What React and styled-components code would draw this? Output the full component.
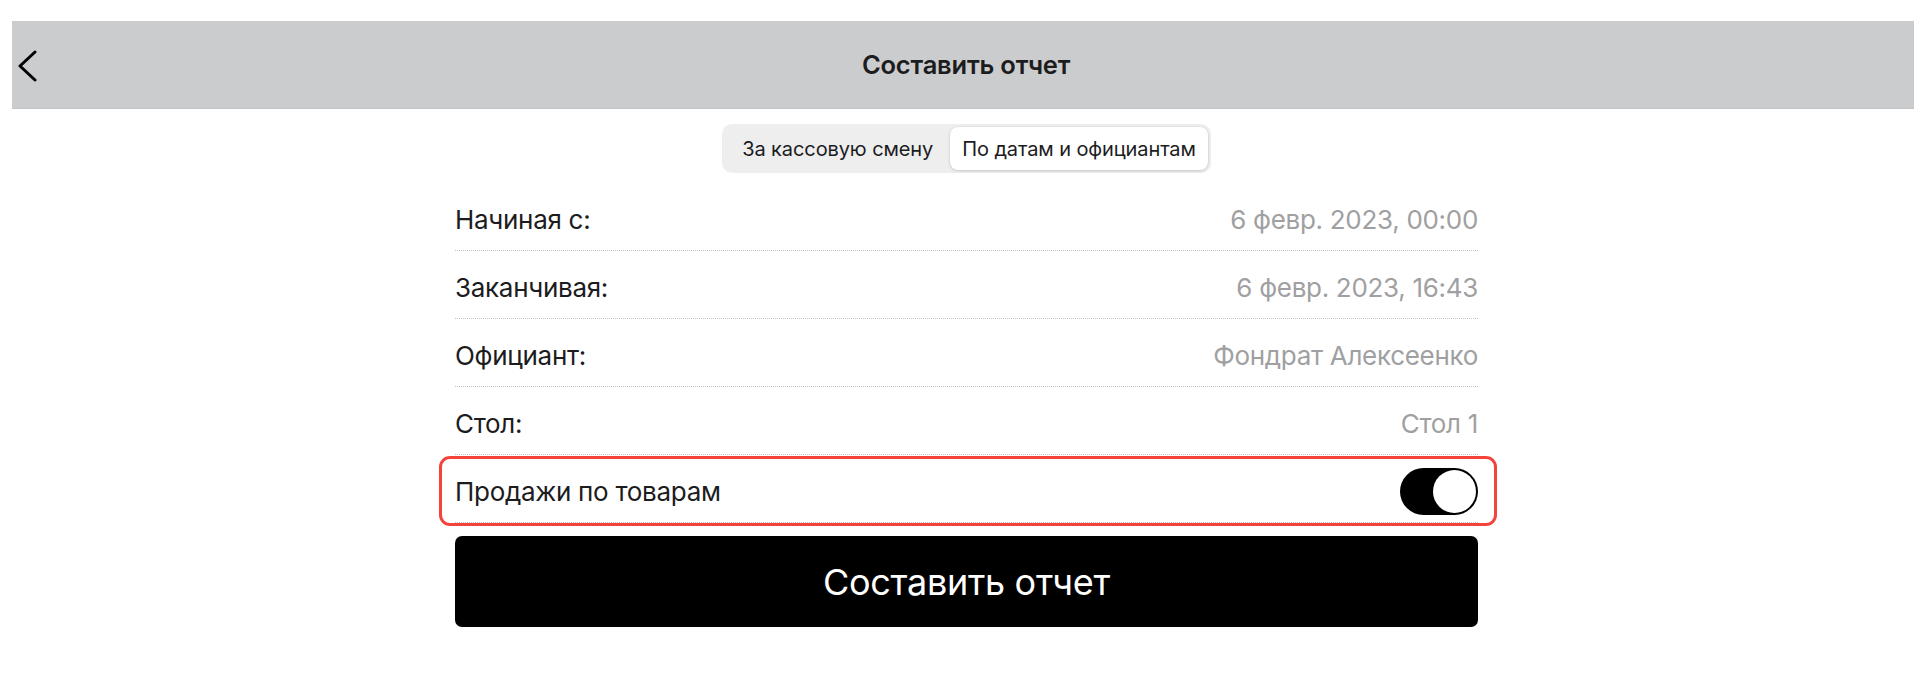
import React, { useState } from 'react'
import styled, { createGlobalStyle } from 'styled-components'

const GlobalStyle = createGlobalStyle`
  html, body {
    margin: 0;
    padding: 0;
    background: #ffffff;
  }
  body {
    font-family: Inter, "Noto Sans", "DejaVu Sans", sans-serif;
    color: #1c1c1e;
    -webkit-font-smoothing: antialiased;
  }
`

const rows = [
  { label: 'Начиная с:', value: '6 февр. 2023, 00:00' },
  { label: 'Заканчивая:', value: '6 февр. 2023, 16:43' },
  { label: 'Официант:', value: 'Фондрат Алексеенко' },
  { label: 'Стол:', value: 'Стол 1' },
]

const tabs = ['За кассовую смену', 'По датам и официантам']

const BackIcon = () => (
  <svg width="20" height="32" viewBox="0 0 20 32" fill="none">
    <polyline
      points="17,2 2,16 17,30"
      stroke="#000"
      strokeWidth="3"
      strokeLinecap="round"
      strokeLinejoin="round"
    />
  </svg>
)

export default function App() {
  const [tab, setTab] = useState(1)
  const [byGoods, setByGoods] = useState(true)

  return (
    <Page>
      <GlobalStyle />
      <TopBar>
        <BackButton aria-label="Назад">
          <BackIcon />
        </BackButton>
        <Title>Составить отчет</Title>
        <span />
      </TopBar>

      <Main>
        <Segmented>
          {tabs.map((t, i) => (
            <Segment key={t} $active={tab === i} onClick={() => setTab(i)}>
              {t}
            </Segment>
          ))}
        </Segmented>

        <Form>
          {rows.map((r) => (
            <Row key={r.label}>
              <Label>{r.label}</Label>
              <Value>{r.value}</Value>
            </Row>
          ))}

          <Highlight>
            <Row $last>
              <Label>Продажи по товарам</Label>
              <Switch $on={byGoods} onClick={() => setByGoods(!byGoods)}>
                <Knob $on={byGoods} />
              </Switch>
            </Row>
          </Highlight>

          <SubmitButton>Составить отчет</SubmitButton>
        </Form>
      </Main>
    </Page>
  )
}

const Page = styled.div`
  padding: 21px 12px 0;
  min-height: 659px;
`

const TopBar = styled.header`
  display: grid;
  grid-template-columns: 1fr auto 1fr;
  align-items: center;
  height: 87px;
  background: #cbcccd;
  border-bottom: 1px solid #c2c3c4;
`

const BackButton = styled.button`
  justify-self: start;
  display: flex;
  align-items: center;
  background: none;
  border: 0;
  padding: 0 0 0 6px;
  margin-top: 2px;
  cursor: pointer;
`

const Title = styled.h1`
  margin: 0;
  padding-left: 6px;
  font-size: 25.5px;
  font-weight: 600;
  color: #1c1c1e;
  letter-spacing: -0.2px;
`

const Main = styled.main`
  display: flex;
  flex-direction: column;
  align-items: center;
  padding: 15px 0 0 7px;
`

const Segmented = styled.div`
  display: inline-flex;
  padding: 3px;
  background: #eeeeef;
  border-radius: 10px;
`

const Segment = styled.button`
  height: 43px;
  padding: 0 ${(p) => (p.$active ? '12px' : '17px')};
  border: 0;
  border-radius: 8px;
  font-family: inherit;
  font-size: 20px;
  font-weight: 400;
  color: #1c1c1e;
  letter-spacing: -0.1px;
  background: ${(p) => (p.$active ? '#ffffff' : 'transparent')};
  box-shadow: ${(p) =>
    p.$active ? '0 1px 3px rgba(0,0,0,0.14), 0 0 0 0.5px rgba(0,0,0,0.06)' : 'none'};
  cursor: pointer;
`

const Form = styled.section`
  width: 1023px;
  margin-top: 10px;
  display: flex;
  flex-direction: column;
`

const Row = styled.div`
  display: flex;
  align-items: center;
  justify-content: space-between;
  height: 62px;
  padding-top: ${(p) => (p.$last ? '1px' : '5px')};
  box-sizing: content-box;
  border-bottom: 1px dotted #c3c3c5;
`

const Label = styled.span`
  font-size: 26px;
  color: #1c1c1e;
  letter-spacing: -0.3px;
`

const Value = styled.span`
  font-size: 26px;
  color: #a0a0a2;
  letter-spacing: -0.3px;
`

const Highlight = styled.div`
  margin: 1px -19px 0 -16px;
  padding: 0 16px 0 13px;
  border: 3px solid #f4433a;
  border-radius: 11px;
`

const Switch = styled.button`
  position: relative;
  width: 78px;
  height: 47px;
  padding: 0;
  border: 0;
  border-radius: 24px;
  background: ${(p) => (p.$on ? '#000000' : '#e5e5ea')};
  cursor: pointer;
`

const Knob = styled.span`
  position: absolute;
  top: 2px;
  left: ${(p) => (p.$on ? '33px' : '2px')};
  width: 43px;
  height: 43px;
  border-radius: 50%;
  background: #ffffff;
  box-shadow: 0 1px 2px rgba(0, 0, 0, 0.2);
`

const SubmitButton = styled.button`
  margin-top: 10px;
  height: 91px;
  border: 0;
  border-radius: 7px;
  background: #000000;
  color: #ffffff;
  font-family: inherit;
  font-size: 36px;
  font-weight: 400;
  letter-spacing: -0.3px;
  cursor: pointer;
`
